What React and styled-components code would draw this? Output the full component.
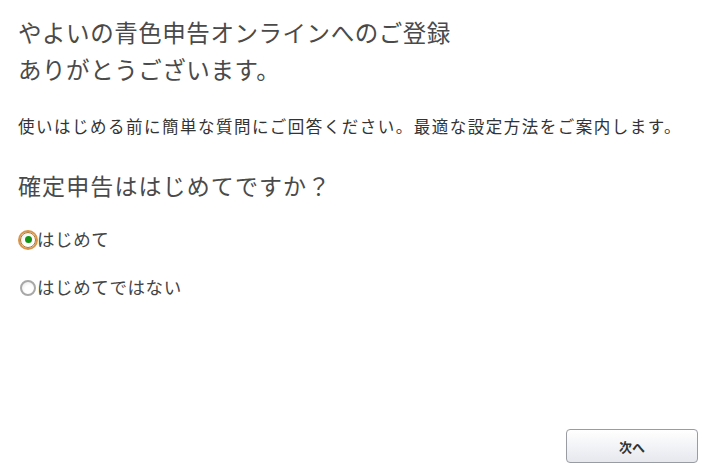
import React, { useState } from 'react';
import styled, { createGlobalStyle } from 'styled-components';

const GlobalStyle = createGlobalStyle`
  html, body {
    margin: 0;
    padding: 0;
    background: #fff;
  }
  body {
    font-family: "Noto Sans CJK JP", "Noto Sans", sans-serif;
    color: #444;
  }
`;

const Page = styled.div`
  width: 718px;
  height: 472px;
  box-sizing: border-box;
  padding: 14px 20px 0 18px;
  display: flex;
  flex-direction: column;
`;

const Title = styled.h1`
  margin: 0;
  font-size: 23.5px;
  font-weight: 400;
  line-height: 37px;
  letter-spacing: 0.55px;
  color: #4a4a4a;
`;

const Lead = styled.p`
  margin: 26px 0 0;
  font-size: 16.5px;
  line-height: 24px;
  letter-spacing: 1.5px;
  color: #333;
`;

const Question = styled.h2`
  margin: 31px 0 0;
  font-size: 23px;
  font-weight: 400;
  line-height: 32px;
  letter-spacing: 1.1px;
  color: #4a4a4a;
`;

const Options = styled.div`
  margin-top: 24px;
  display: flex;
  flex-direction: column;
  gap: 22px;
`;

const Option = styled.label`
  display: flex;
  align-items: center;
  gap: 1px;
  height: 26px;
  font-size: 17.5px;
  letter-spacing: 0.6px;
  color: #444;
  cursor: pointer;
`;

const Radio = styled.span`
  width: 16px;
  height: 16px;
  margin: 3px 0 0 2px;
  border-radius: 50%;
  box-sizing: border-box;
  display: flex;
  align-items: center;
  justify-content: center;
  flex-shrink: 0;
  border: ${p => (p.$checked ? '1px solid #a87838' : '2px solid #a8a8a8')};
  background: radial-gradient(circle at 60% 65%, #ffffff 40%, #e4e4e4);
  box-shadow: ${p => (p.$checked ? '0 0 0 2px #d9944a' : 'none')};

  &::after {
    content: '';
    display: ${p => (p.$checked ? 'block' : 'none')};
    width: 7px;
    height: 7px;
    border-radius: 50%;
    background: #129312;
  }
`;

const Footer = styled.div`
  margin-top: auto;
  display: flex;
  justify-content: flex-end;
  padding: 0 0 9px;
`;

const NextButton = styled.button`
  width: 132px;
  height: 34px;
  border: 1px solid #9a9ca4;
  border-radius: 4px;
  background: linear-gradient(#ffffff, #e6e8ee);
  font-family: "Noto Sans CJK JP", sans-serif;
  font-size: 13px;
  font-weight: 700;
  color: #333;
  cursor: pointer;
`;

const options = ['はじめて', 'はじめてではない'];

const App = () => {
  const [selected, setSelected] = useState(0);

  return (
    <>
      <GlobalStyle />
      <Page>
        <Title>
          やよいの青色申告オンラインへのご登録
          <br />
          ありがとうございます。
        </Title>
        <Lead>使いはじめる前に簡単な質問にご回答ください。最適な設定方法をご案内します。</Lead>
        <Question>確定申告ははじめてですか？</Question>
        <Options>
          {options.map((label, i) => (
            <Option key={label} onClick={() => setSelected(i)}>
              <Radio $checked={selected === i} />
              {label}
            </Option>
          ))}
        </Options>
        <Footer>
          <NextButton>次へ</NextButton>
        </Footer>
      </Page>
    </>
  );
};

export default App;
